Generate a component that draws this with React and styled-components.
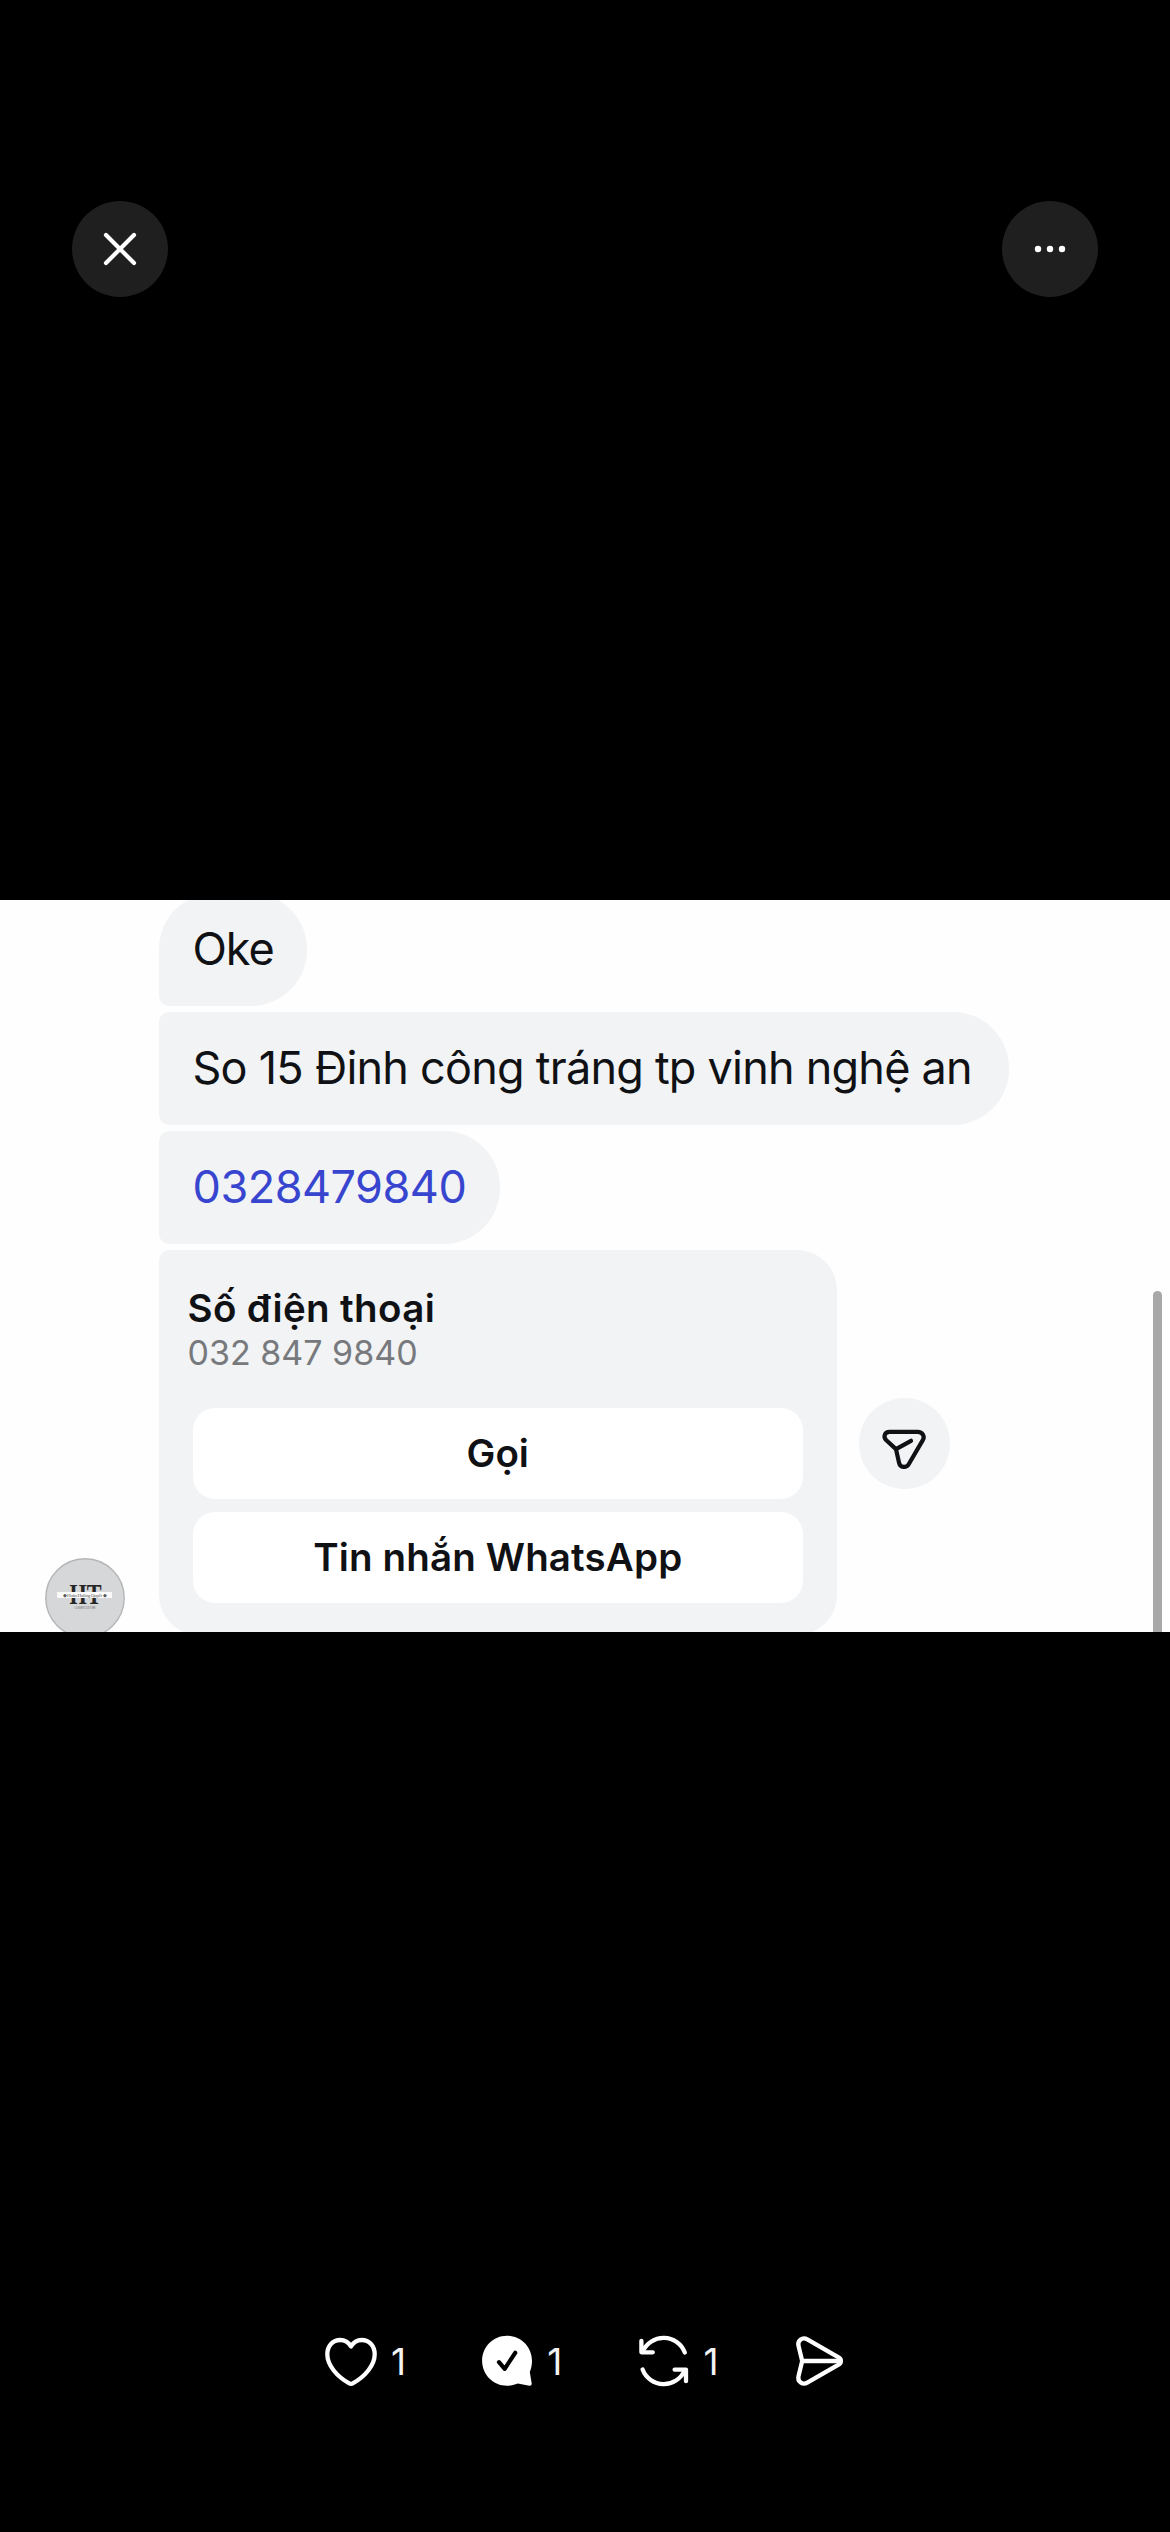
import React from "react";
import styled, {createGlobalStyle} from "styled-components";

const messages = [
  {id: 1, text: "Oke", spacing: -1.1, padding: 33, first: true},
  {id: 2, text: "So 15 Đinh công tráng tp vinh nghệ an", spacing: -0.77, padding: 37},
  {id: 3, text: "0328479840", spacing: -0.5, padding: 34, link: true},
]

const App = () => {
  return (
    <>
      <GlobalStyle/>
      <StViewer>
        <StTopBar>
          <StRoundButton aria-label="Đóng"><CloseIcon/></StRoundButton>
          <StRoundButton aria-label="Thêm"><MoreIcon/></StRoundButton>
        </StTopBar>
        <StPhoto>
          <StThread>
            {messages.map((message) => (
              <StBubble
                key={message.id}
                $first={message.first}
                $link={message.link}
                $spacing={message.spacing}
                $padding={message.padding}
              >
                {message.text}
              </StBubble>
            ))}
          </StThread>
          <ContactRow/>
          <StScrollbar/>
        </StPhoto>
        <StActions>
          <StAction><HeartIcon/><StCount>1</StCount></StAction>
          <StAction><ReplyIcon/><StCount>1</StCount></StAction>
          <StAction><RepostIcon/><StCount>1</StCount></StAction>
          <StAction><SendIcon/></StAction>
        </StActions>
      </StViewer>
    </>
  )
}

const ContactRow = () => (
  <StContactRow>
    <StAvatarSlot>
      <Avatar/>
    </StAvatarSlot>
    <StCard>
      <StCardTitle>Số điện thoại</StCardTitle>
      <StCardPhone>032 847 9840</StCardPhone>
      <StCardButtons>
        <StCardButton>Gọi</StCardButton>
        <StCardButton $spacing={0.15}>Tin nhắn WhatsApp</StCardButton>
      </StCardButtons>
    </StCard>
    <StShareButton aria-label="Chia sẻ"><ShareIcon/></StShareButton>
  </StContactRow>
)

const Avatar = () => (
  <svg width="80" height="80" viewBox="0 0 80 80">
    <circle cx="40" cy="40" r="39.2" fill="#d6d7d8" stroke="#b4b5b6" strokeWidth="1.4"/>
    <text x="40.5" y="46.2" textAnchor="middle" fontFamily="'Liberation Serif', serif" fontWeight="700" fontSize="29" textLength="32" lengthAdjust="spacingAndGlyphs" fill="#262626">HT</text>
    <rect x="12" y="34" width="55" height="6" fill="#fafafa"/>
    <text x="39.500" y="38.600" textAnchor="middle" fontFamily="'Liberation Serif', serif" fontSize="5" textLength="44" fill="#555">◆ Hoàn Hường Quyết ◆</text>
    <text x="40" y="50.500" textAnchor="middle" fontFamily="'Liberation Sans', sans-serif" fontSize="2.600" textLength="21" fill="#777">COSMETICS STORE</text>
  </svg>
)

const CloseIcon = () => (
  <svg width="96" height="96" viewBox="0 0 96 96" fill="none" stroke="#fff" strokeWidth="4.2" strokeLinecap="round">
    <path d="M34 34L62 62M62 34L34 62"/>
  </svg>
)

const MoreIcon = () => (
  <svg width="96" height="96" viewBox="0 0 96 96" fill="#fff">
    <circle cx="36" cy="48" r="3.2"/>
    <circle cx="48" cy="48" r="3.2"/>
    <circle cx="60" cy="48" r="3.2"/>
  </svg>
)

const ShareIcon = () => (
  <svg width="91" height="91" viewBox="0 0 91 91" fill="none" stroke="#101114" strokeWidth="4.2" strokeLinecap="round" strokeLinejoin="round">
    <path d="M30.5 33.9H58.7C63.4 33.9 66.2 38.2 63.8 42.2L49.7 66.2C47.2 70.4 41.2 69.6 40.1 64.9L37 51.1L27.3 42.2C23.8 38.8 25.8 33.9 30.5 33.9Z"/>
    <path d="M37 51.1L52 42.8"/>
  </svg>
)

const HeartIcon = () => (
  <svg width="54" height="54" viewBox="0 0 54 54" fill="none" stroke="#fff" strokeWidth="4.3" strokeLinejoin="round">
    <path d="M27 12.5C24.6 8.4 20.6 6 16.2 6C8.8 6 3.3 11.9 3.3 20.3C3.3 31.4 13.1 42.6 25.3 49.4Q27 50.4 28.7 49.4C40.9 42.6 50.7 31.4 50.7 20.3C50.7 11.9 45.2 6 37.8 6C33.4 6 29.4 8.4 27 12.5Z"/>
  </svg>
)

const ReplyIcon = () => (
  <svg width="54" height="54" viewBox="0 0 54 54">
    <path fill="#fff" d="M27 1.8C13.2 1.8 2.1 12.9 2.1 26.8S13.2 51.8 27 51.8C31 51.8 34.5 51 37.8 49.6L49.4 51.8C50.9 52 51.9 51 51.7 49.5L49.8 38C51.3 34.6 52 30.9 52 26.8C52 12.9 40.8 1.8 27 1.8Z"/>
    <path fill="none" stroke="#000" strokeWidth="4.2" strokeLinecap="round" strokeLinejoin="round" d="M19 28.2L24.7 34.8L35.2 18.8"/>
  </svg>
)

const RepostIcon = () => (
  <svg width="54" height="54" viewBox="0 0 54 54" fill="none" stroke="#fff" strokeWidth="4.3" strokeLinecap="round" strokeLinejoin="round">
    <path d="M4.4 6.8V18.3H15.8"/>
    <path d="M5.8 17.5A22.7 22.7 0 0 1 47.8 18.5"/>
    <path d="M49 47.2V35.7H37.6"/>
    <path d="M47.6 36.5A22.7 22.7 0 0 1 5.6 35.5"/>
  </svg>
)

const SendIcon = () => (
  <svg width="54" height="54" viewBox="0 0 54 54" fill="none" stroke="#fff" strokeWidth="4.3" strokeLinecap="round" strokeLinejoin="round">
    <path d="M9.2 27L5.5 11.8C4.2 6.4 9.6 2.7 14.3 5.4L46 23.6C48.6 25.1 48.6 28.9 46 30.4L14.3 48.6C9.6 51.3 4.2 47.6 5.5 42.2Z"/>
    <path d="M9.2 27H47"/>
  </svg>
)

const GlobalStyle = createGlobalStyle`
  body {
    margin: 0;
    background: #000;
  }

  svg {
    display: block;
    flex: none;
  }
`

const StViewer = styled.div`
  display: flex;
  flex-direction: column;
  width: 1170px;
  height: 2532px;
  overflow: hidden;
  background: #000;
  font-family: Inter, sans-serif;
`

const StTopBar = styled.div`
  display: flex;
  justify-content: space-between;
  align-items: flex-start;
  box-sizing: border-box;
  height: 900px;
  padding: 201px 72px 0;
`

const StRoundButton = styled.button`
  width: 96px;
  height: 96px;
  padding: 0;
  border: none;
  border-radius: 50%;
  background-color: #1f1f1f;
`

const StPhoto = styled.div`
  position: relative;
  height: 732px;
  overflow: hidden;
  background: #fefefe;
`

const StThread = styled.div`
  display: flex;
  flex-direction: column;
  align-items: flex-start;
  gap: 6px;
  margin: -7px 0 6px;
  padding-left: 158.5px;
`

const StBubble = styled.div`
  box-sizing: border-box;
  height: 113px;
  padding: 0 ${props => props.$padding}px 0 34px;
  border-radius: ${props => props.$first ? "56px 56px 56px 10px" : "10px 56px 56px 10px"};
  background-color: #f1f3f5;
  color: ${props => props.$link ? "#3845cf" : "#101114"};
  font-size: 45px;
  line-height: 111px;
  letter-spacing: ${props => props.$spacing}px;
  white-space: nowrap;
`

const StContactRow = styled.div`
  display: flex;
  align-items: center;
`

const StAvatarSlot = styled.div`
  align-self: flex-end;
  box-sizing: border-box;
  width: 158.5px;
  padding-left: 45px;
  margin-bottom: -3px;
`

const StCard = styled.div`
  box-sizing: border-box;
  width: 678.5px;
  height: 385px;
  padding: 35px 34px 0 29px;
  border-radius: 10px 40px 40px 40px;
  background-color: #f1f3f5;
`

const StCardTitle = styled.div`
  color: #101114;
  font-size: 38.5px;
  font-weight: 600;
  line-height: 46px;
  letter-spacing: 0.37px;
`

const StCardPhone = styled.div`
  color: #77797d;
  font-size: 34px;
  line-height: 44px;
`

const StCardButtons = styled.div`
  display: flex;
  flex-direction: column;
  gap: 13px;
  margin: 33px 0 0 5px;
`

const StCardButton = styled.button`
  height: 91px;
  padding: 0;
  border: none;
  border-radius: 22px;
  background-color: #fff;
  color: #101114;
  font-family: inherit;
  font-size: 38.5px;
  font-weight: 600;
  line-height: 91px;
  letter-spacing: ${props => props.$spacing || 0}px;
`

const StShareButton = styled.button`
  width: 91px;
  height: 91px;
  margin: 1px 0 0 22px;
  padding: 0;
  border: none;
  border-radius: 50%;
  background-color: #f1f3f5;
`

const StScrollbar = styled.div`
  position: absolute;
  top: 391px;
  right: 8px;
  bottom: -8px;
  width: 9px;
  border-radius: 5px;
  background-color: #a8a8a8;
`

const StActions = styled.div`
  display: grid;
  grid-template-columns: repeat(4, 156.3px);
  padding: 702px 0 0 324px;
`

const StAction = styled.div`
  display: flex;
  align-items: center;
  gap: 13px;
  height: 54px;
`

const StCount = styled.span`
  padding-top: 2px;
  color: #f3f3f3;
  font-size: 37px;
  line-height: 54px;
`

export default App
